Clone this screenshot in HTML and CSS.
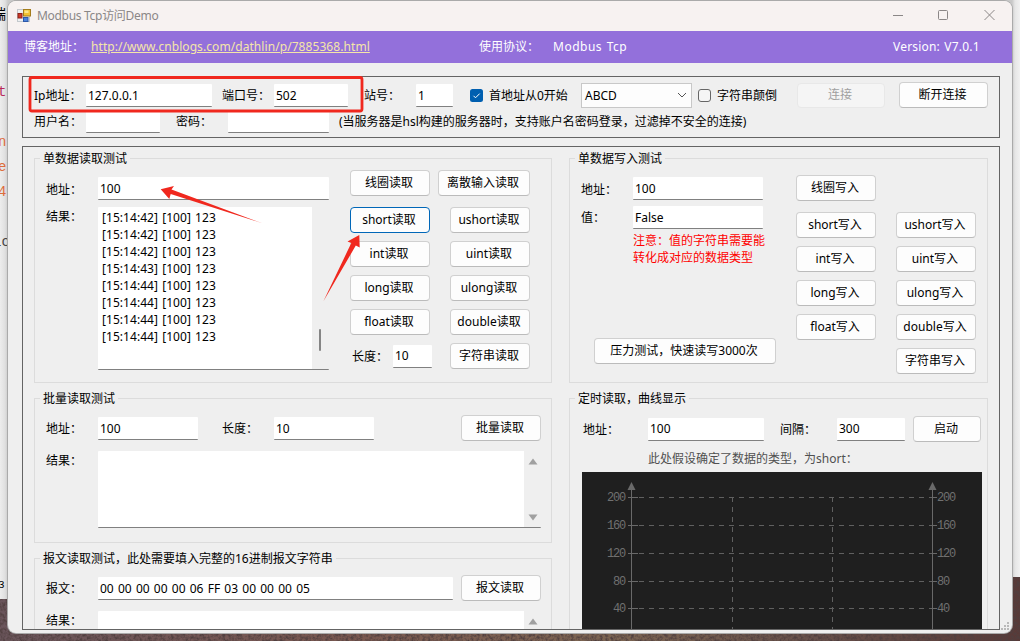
FILE: index.html
```html
<!DOCTYPE html>
<html lang="zh-CN">
  <head>
    <meta charset="UTF-8" />
    <meta name="viewport" content="width=device-width, initial-scale=1.0" />
    <title>Modbus Tcp访问Demo</title>
    <link rel="stylesheet" href="styles.css">
  </head>

  <body>
    <div class="desktop">
      <svg class="wallpaper" width="1020" height="64">
        <defs>
          <linearGradient id="rock" x1="0" x2="1" y1="0" y2="0">
            <stop offset="0" stop-color="#6a555b" />
            <stop offset="0.35" stop-color="#7a5850" />
            <stop offset="0.6" stop-color="#7c6552" />
            <stop offset="0.8" stop-color="#67504a" />
            <stop offset="1" stop-color="#583a38" />
          </linearGradient>
          <filter id="grain" x="0" y="0" width="100%" height="100%">
            <feTurbulence type="fractalNoise" baseFrequency="0.35" numOctaves="3" seed="4" />
            <feColorMatrix values="0 0 0 0 0.08  0 0 0 0 0.05  0 0 0 0 0.05  2.4 0 0 0 -0.9" />
          </filter>
        </defs>
        <rect width="1020" height="64" fill="url(#rock)" />
        <rect width="1020" height="64" filter="url(#grain)" />
      </svg>
      <div class="editor-left">
        <span class="code code-title">端</span>
        <span class="code code-t">t</span>
        <span class="code code-n">n</span>
        <span class="code code-e">e</span>
        <span class="code code-4">4</span>
        <span class="code code-lc">lc</span>
        <span class="code code-3">3</span>
      </div>
      <div class="editor-right"></div>

      <div class="window">
        <div class="titlebar">
          <svg class="app-icon" width="14" height="14" viewBox="0 0 14 14">
            <rect x="0.5" y="0.5" width="12" height="12" fill="#eef0f2" stroke="#c3c8cc" />
            <rect x="6.5" y="0.5" width="7" height="6.5" fill="#f3c230" stroke="#a47c1c" />
            <rect x="7.5" y="1.5" width="4" height="2.5" fill="#fbe58c" />
            <rect x="1" y="4.5" width="4" height="4.5" fill="#cf3a28" stroke="#8e2118" />
            <rect x="6.5" y="8.5" width="4.5" height="4" fill="#4b83dc" stroke="#2c58a8" />
          </svg>
          <span class="title">Modbus Tcp访问Demo</span>
          <svg class="caption-buttons" width="104" height="12" viewBox="0 0 104 12">
            <path d="M0 6.5H10" />
            <rect x="45.5" y="1.5" width="9" height="9" rx="1" />
            <path d="M91.5 1L101.5 11M101.5 1L91.5 11" />
          </svg>
        </div>

        <div class="banner">
          <span>博客地址：</span>
          <a href="#">http://www.cnblogs.com/dathlin/p/7885368.html</a>
          <span>使用协议：</span>
          <span class="protocol">Modbus Tcp</span>
          <span class="version">Version: V7.0.1</span>
        </div>

        <div class="panel connection">
          <div class="row conn-row">
            <label for="ip">Ip地址：</label>
            <input type="text" id="ip" class="w126" value="127.0.0.1" />
            <label for="port">端口号：</label>
            <input type="text" id="port" class="w74" value="502" />
            <label for="station">站号：</label>
            <input type="text" id="station" class="w37" value="1" />
            <div class="check">
              <svg width="13" height="13" viewBox="0 0 13 13">
                <rect width="13" height="13" rx="2.5" fill="#005fb0" />
                <path d="M3.5 6.8L5.5 8.8L9.7 4.6" fill="none" stroke="#fff" />
              </svg>
              <span>首地址从0开始</span>
            </div>
            <div class="select">
              <span>ABCD</span>
              <svg width="10" height="6" viewBox="0 0 10 6">
                <path d="M1 1L5 5L9 1" fill="none" stroke="#555" />
              </svg>
            </div>
            <div class="check">
              <svg width="13" height="13" viewBox="0 0 13 13">
                <rect x="0.5" y="0.5" width="12" height="12" rx="2.5" fill="#f5f5f5" stroke="#666" />
              </svg>
              <span>字符串颠倒</span>
            </div>
            <button class="btn w88" disabled>连接</button>
            <button class="btn w89">断开连接</button>
          </div>
          <div class="row user-row">
            <label for="user">用户名：</label>
            <input type="text" id="user" class="w74" />
            <label for="password">密码：</label>
            <input type="text" id="password" class="w101" />
            <label>(当服务器是hsl构建的服务器时，支持账户名密码登录，过滤掉不安全的连接)</label>
          </div>
        </div>

        <div class="panel main">
          <div class="column left">
            <fieldset class="single-read">
              <legend>单数据读取测试</legend>
              <div class="read-form">
                <label for="read-address">地址：</label>
                <input type="text" id="read-address" value="100" />
                <label class="top">结果：</label>
                <div class="result log">
                  <div class="lines">
                    <div>[15:14:42] [100] 123</div>
                    <div>[15:14:42] [100] 123</div>
                    <div>[15:14:42] [100] 123</div>
                    <div>[15:14:43] [100] 123</div>
                    <div>[15:14:44] [100] 123</div>
                    <div>[15:14:44] [100] 123</div>
                    <div>[15:14:44] [100] 123</div>
                    <div>[15:14:44] [100] 123</div>
                  </div>
                  <div class="scrollbar"><div class="thumb"></div></div>
                </div>
              </div>
              <div class="read-buttons">
                <button class="btn">线圈读取</button>
                <button class="btn wide">离散输入读取</button>
                <button class="btn focused">short读取</button>
                <button class="btn">ushort读取</button>
                <button class="btn">int读取</button>
                <button class="btn">uint读取</button>
                <button class="btn">long读取</button>
                <button class="btn">ulong读取</button>
                <button class="btn">float读取</button>
                <button class="btn">double读取</button>
                <div class="length">
                  <label for="read-length">长度：</label>
                  <input type="text" id="read-length" value="10" />
                </div>
                <button class="btn">字符串读取</button>
              </div>
            </fieldset>

            <fieldset class="batch-read">
              <legend>批量读取测试</legend>
              <div class="row batch-row">
                <label for="batch-address">地址：</label>
                <input type="text" id="batch-address" class="w100" value="100" />
                <label for="batch-length">长度：</label>
                <input type="text" id="batch-length" class="w100" value="10" />
                <button class="btn">批量读取</button>
              </div>
              <div class="row result-row">
                <label>结果：</label>
                <div class="result">
                  <div class="scrollbar arrows">
                    <svg width="10" height="7"><path d="M5 0.5L9.5 6.5H0.5Z" /></svg>
                    <svg width="10" height="7"><path d="M5 6.5L9.5 0.5H0.5Z" /></svg>
                  </div>
                </div>
              </div>
            </fieldset>

            <fieldset class="message-read">
              <legend>报文读取测试，此处需要填入完整的16进制报文字符串</legend>
              <div class="row message-row">
                <label for="message">报文：</label>
                <input type="text" id="message" value="00 00 00 00 00 06 FF 03 00 00 00 05" />
                <button class="btn">报文读取</button>
              </div>
              <div class="row result-row">
                <label>结果：</label>
                <div class="result">
                  <div class="scrollbar arrows">
                    <svg width="10" height="7"><path d="M5 0.5L9.5 6.5H0.5Z" /></svg>
                    <svg width="10" height="7"><path d="M5 6.5L9.5 0.5H0.5Z" /></svg>
                  </div>
                </div>
              </div>
            </fieldset>
          </div>

          <div class="column right">
            <fieldset class="single-write">
              <legend>单数据写入测试</legend>
              <div class="write-side">
                <div class="write-form">
                  <label for="write-address">地址：</label>
                  <input type="text" id="write-address" value="100" />
                  <label for="write-value" class="value-label">值：</label>
                  <input type="text" id="write-value" value="False" />
                </div>
                <p class="warning">注意：值的字符串需要能<br />转化成对应的数据类型</p>
                <button class="btn stress">压力测试，快速读写3000次</button>
              </div>
              <div class="write-buttons">
                <button class="btn">线圈写入</button>
                <span></span>
                <button class="btn">short写入</button>
                <button class="btn">ushort写入</button>
                <button class="btn">int写入</button>
                <button class="btn">uint写入</button>
                <button class="btn">long写入</button>
                <button class="btn">ulong写入</button>
                <button class="btn">float写入</button>
                <button class="btn">double写入</button>
                <span></span>
                <button class="btn">字符串写入</button>
              </div>
            </fieldset>

            <fieldset class="timer-read">
              <legend>定时读取，曲线显示</legend>
              <div class="row timer-row">
                <label for="timer-address">地址：</label>
                <input type="text" id="timer-address" class="w116" value="100" />
                <label for="interval">间隔：</label>
                <input type="text" id="interval" class="interval" value="300" />
                <button class="btn start">启动</button>
              </div>
              <p class="hint">此处假设确定了数据的类型，为short：</p>
              <svg class="chart" width="400" height="170" viewBox="0 0 400 170">
                <g class="grid">
                  <path d="M57 25.5H350M57 53.5H350M57 81.5H350M57 109.5H350M57 136.5H350" />
                  <path d="M150.5 25V170M250.5 25V170" />
                </g>
                <path class="axis" d="M49.5 14V170M350.5 14V170" />
                <path class="axis" d="M46 25.5H56M46 53.5H56M46 81.5H56M46 109.5H56M46 136.5H56" />
                <path class="axis" d="M350 25.5H355M350 53.5H355M350 81.5H355M350 109.5H355M350 136.5H355" />
                <path class="head" d="M49.5 10L53.5 18H45.5ZM350.5 10L354.5 18H346.5Z" />
                <g class="ticks left-ticks">
                  <text x="43" y="29">200</text>
                  <text x="43" y="57">160</text>
                  <text x="43" y="85">120</text>
                  <text x="43" y="113">80</text>
                  <text x="43" y="140">40</text>
                </g>
                <g class="ticks">
                  <text x="355" y="29">200</text>
                  <text x="355" y="57">160</text>
                  <text x="355" y="85">120</text>
                  <text x="355" y="113">80</text>
                  <text x="355" y="140">40</text>
                </g>
              </svg>
            </fieldset>
          </div>
        </div>

        <svg class="grip" width="9" height="9" viewBox="0 0 9 9">
          <path d="M6 0h2v2h-2zM3 3h2v2h-2zM6 3h2v2h-2zM0 6h2v2h-2zM3 6h2v2h-2zM6 6h2v2h-2z" fill="#b9b9b9" />
        </svg>
      </div>

      <!-- red markers over the window -->
      <svg class="markers" width="1020" height="641">
        <rect x="30" y="77.5" width="332" height="33.5" rx="2" fill="none" stroke="#f0281e" stroke-width="2.8" />
        <path d="M160.7 189.3L174 186L171.5 189.5L263 223.5L170.7 194L169.3 199Z" />
        <path d="M359.3 235L359.7 247.5L355.8 245.5L323.3 301.5L351.3 243L347.5 241.5Z" />
      </svg>
    </div>
  </body>
</html>
```

FILE: styles.css
```css
* {
  box-sizing: border-box;
}

body {
  margin: 0;
  font-family: "Noto Sans", "Noto Sans CJK SC", sans-serif;
  font-size: 12px;
  line-height: 16px;
  color: #000;
}

.desktop {
  position: relative;
  width: 1020px;
  height: 641px;
  overflow: hidden;
  background-color: #b5b1b1;
}

.wallpaper {
  position: absolute;
  left: 0;
  top: 577px;
}

.editor-left {
  position: absolute;
  left: 0;
  top: 0;
  width: 14px;
  height: 599px;
  overflow: hidden;
  background: linear-gradient(to right, #ededed 0, #e0e0e0 5px, #c9c9c9 8px);
}

.editor-right {
  position: absolute;
  right: 0;
  top: 0;
  width: 18px;
  height: 577px;
  background: linear-gradient(to right, #c8c8c8 10px, #e6e6e6 13px, #f1f1f1 18px);
}

.code {
  position: absolute;
  font-family: "Liberation Mono", "Noto Sans CJK SC", monospace;
  font-size: 14px;
}

.code-title {
  left: -8px;
  top: 7px;
}

.code-t {
  left: -2px;
  top: 84px;
  color: #b8285a;
}

.code-n {
  left: -2px;
  top: 134px;
  color: #dd6c3b;
}

.code-e {
  left: -2px;
  top: 159px;
  color: #dd6c3b;
}

.code-4 {
  left: -2px;
  top: 184px;
  color: #dd6c3b;
}

.code-lc {
  left: -7px;
  top: 234px;
  color: #444;
}

.code-3 {
  left: -2px;
  top: 577px;
  font-size: 11px;
}

.window {
  position: absolute;
  left: 8px;
  top: 1px;
  width: 1004px;
  height: 632px;
  overflow: hidden;
  border-radius: 8px;
  background-color: #efefef;
  box-shadow: 0 0 0 1px #aaa;
}

.titlebar {
  display: flex;
  align-items: center;
  height: 30px;
  padding: 0 15px 0 9px;
  background-color: #f7f2f1;
}

.title {
  flex: 1;
  margin-left: 6px;
  color: #8b8787;
  letter-spacing: -0.3px;
}

.caption-buttons {
  margin-top: -2px;
  fill: none;
  stroke: #8b8787;
}

.banner {
  display: grid;
  grid-template-columns: 67px 388px 74px 340px auto;
  align-items: center;
  height: 32px;
  padding-left: 16px;
  background-color: #9370db;
  color: #fff;
}

.banner a {
  color: #f5e6a8;
  letter-spacing: 0.07px;
}

.protocol {
  letter-spacing: 0.5px;
  word-spacing: 1px;
}

.version {
  letter-spacing: 0.2px;
  word-spacing: 1px;
}

.panel {
  margin-left: 14px;
  width: 978px;
  border: 1px solid #646464;
}

.row {
  display: grid;
  align-items: center;
}

label,
legend,
span,
p {
  white-space: nowrap;
}

label {
  padding-top: 2px;
}

input,
.result {
  width: 100%;
  border: 0;
  border-bottom: 1px solid #808080;
  border-radius: 1px;
  background-color: #fff;
}

input {
  height: 23px;
  padding: 0 2px;
  font: inherit;
  word-spacing: 1.1px;
  outline: none;
}

.btn {
  width: 80px;
  height: 26px;
  padding: 0 2px 1px 0;
  border: 1px solid #d0d0d0;
  border-bottom-color: #bbb;
  border-radius: 4px;
  background-color: #fdfdfd;
  color: #000;
  font: inherit;
  white-space: nowrap;
}

.btn:disabled {
  height: 25px;
  border-color: #e8e8e8;
  background-color: #f5f5f5;
  color: #a0a0a0;
}

.btn.focused {
  border-color: #0067b8;
}

.w37 { width: 37px; }
.w74 { width: 74px; }
.w88 { width: 88px; }
.w89 { width: 89px; }
.w100 { width: 100px; }
.w101 { width: 101px; }
.w116 { width: 116px; }
.w126 { width: 126px; }

/* connection panel */
.connection {
  height: 62px;
  margin-top: 13px;
  padding: 5px 0 0 11px;
}

.conn-row {
  grid-template-columns: 52px 136px 52px 90px 52px 54px 111px 117px 99px 102px 89px;
  height: 26px;
}

.conn-row input {
  padding-top: 2px;
}

.user-row {
  grid-template-columns: 52px 90px 52px 111px auto;
  height: 26px;
}

.check {
  display: flex;
  align-items: center;
  gap: 6px;
}

.check span,
.select span {
  padding-top: 2px;
}

.select {
  display: flex;
  align-items: center;
  justify-content: space-between;
  width: 111px;
  height: 25px;
  padding: 0 4px 0 3px;
  border: 1px solid #c8c8c8;
  background-color: #fdfdfd;
}

/* main panel */
.main {
  display: flex;
  gap: 17px;
  height: 484px;
  margin-top: 8px;
  padding: 3px 0 0 11px;
  overflow: hidden;
}

.column {
  display: flex;
  flex-direction: column;
  gap: 7px;
}

.left {
  width: 518px;
}

.right {
  width: 419px;
}

fieldset {
  flex: none;
  min-width: 0;
  margin: 0;
  padding: 0;
  border: 1px solid #dcdcdc;
}

legend {
  height: 16px;
  margin-left: 5px;
  padding: 0 3px;
  line-height: 18px;
}

.single-read,
.single-write {
  display: flex;
  align-items: flex-start;
  height: 233px;
}

.read-form {
  display: grid;
  grid-template-columns: 52px 231px;
  grid-template-rows: 23px 163px;
  row-gap: 7px;
  align-items: center;
  margin: 11px 0 0 11px;
}

.read-form .top {
  align-self: start;
}

.result {
  display: flex;
  justify-content: flex-end;
}

.log {
  height: 163px;
}

.lines {
  flex: 1;
  padding: 2px 0 0 4px;
  line-height: 17px;
  letter-spacing: 0.05px;
  word-spacing: 1px;
}

.scrollbar {
  width: 17px;
  background-color: #efefef;
}

.thumb {
  width: 2px;
  height: 22px;
  margin: 122px 0 0 7px;
  border-radius: 1px;
  background-color: #858585;
}

.arrows {
  display: flex;
  flex-direction: column;
  align-items: center;
  justify-content: space-between;
  padding: 7px 0 6px;
  fill: #a0a0a0;
}

.read-buttons {
  display: grid;
  grid-template-columns: 80px 80px;
  grid-template-rows: 29px repeat(5, 26px);
  gap: 8px 20px;
  margin: 4px 0 0 21px;
}

.read-buttons .wide {
  width: 92px;
  margin-left: -12px;
}

.length {
  display: flex;
  align-items: center;
  padding-left: 2px;
}

.length label {
  flex: none;
  width: 41px;
}

.length input {
  flex: none;
  width: 39px;
}

.batch-read {
  height: 153px;
}

.batch-row {
  grid-template-columns: 52px 124px 52px 187px 80px;
  height: 26px;
  margin: 9px 0 0 11px;
}

.batch-row input,
.message-row input {
  padding-top: 1px;
}

.result-row {
  grid-template-columns: 52px 443px;
  align-items: start;
  margin: 10px 0 0 11px;
}

.result-row .result {
  height: 77px;
}

.message-read {
  height: 153px;
}

.message-row {
  grid-template-columns: 52px 355px 80px;
  height: 26px;
  margin: 9px 0 0 11px;
}

.message-row .btn {
  margin-left: 8px;
}

.write-side {
  width: 206px;
}

.write-form {
  display: grid;
  grid-template-columns: 52px 130px;
  row-gap: 6px;
  align-items: center;
  margin: 11px 0 0 11px;
}

.write-form .value-label {
  padding-top: 0;
}

.warning {
  margin: 3px 0 0 63px;
  line-height: 17px;
  color: #f00;
}

.stress {
  width: 182px;
  margin: 72px 0 0 24px;
}

.write-buttons {
  display: grid;
  grid-template-columns: 80px 80px;
  grid-template-rows: 29px repeat(5, 26px);
  gap: 8px 20px;
  margin: 9px 0 0 20px;
}

.timer-read {
  height: 300px;
}

.timer-row {
  grid-template-columns: 65px 132px 57px 76px 68px;
  height: 26px;
  margin: 10px 0 0 13px;
}

.interval {
  width: 68px;
}

.start {
  width: 68px;
}

.hint {
  margin: 9px 0 0 78px;
  color: #505050;
}

.chart {
  display: block;
  margin: 5px 0 0 12px;
  background-color: #1f1f1f;
}

.grid {
  fill: none;
  stroke: #606060;
  stroke-dasharray: 5 5;
}

.axis {
  fill: none;
  stroke: #696969;
}

.head {
  fill: #696969;
}

.ticks {
  fill: #707070;
  font-family: "Liberation Mono", monospace;
  font-size: 12px;
  letter-spacing: -1.2px;
}

.left-ticks {
  text-anchor: end;
}

.grip {
  position: absolute;
  right: 2px;
  bottom: 2px;
}

.markers {
  position: absolute;
  left: 0;
  top: 0;
  fill: #f0281e;
  pointer-events: none;
}
```
